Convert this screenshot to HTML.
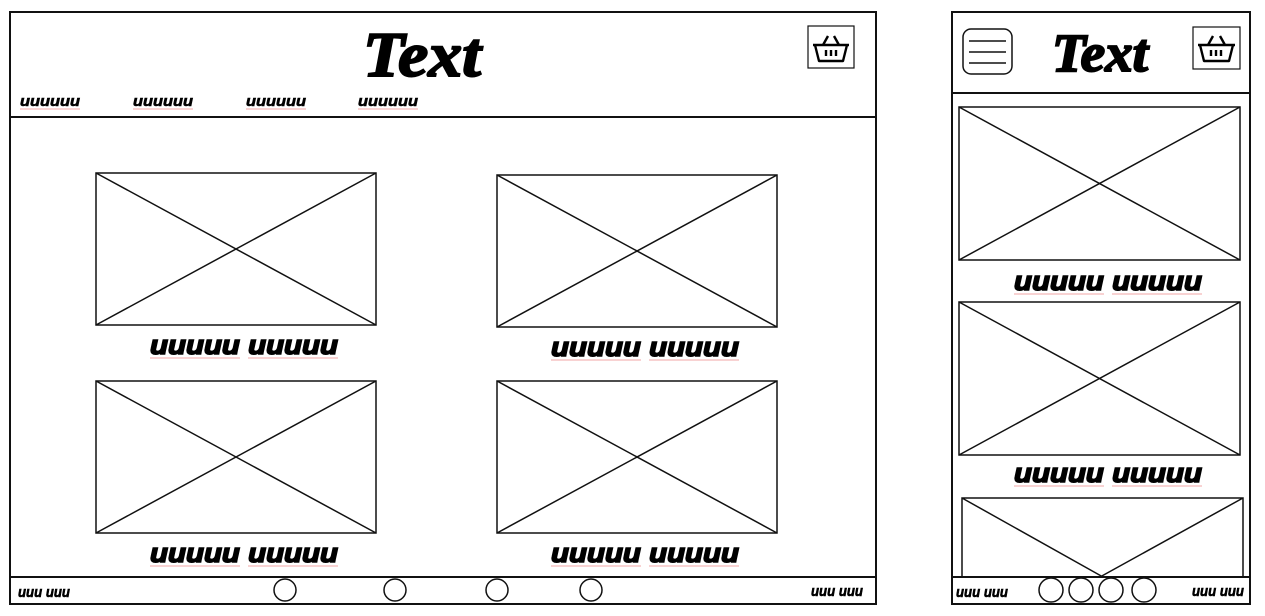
<!DOCTYPE html>
<html><head><meta charset="utf-8"><style>
html,body{margin:0;padding:0;background:#fff;width:1265px;height:616px;overflow:hidden}
svg{display:block}
.t{font-family:"Liberation Serif",serif;font-weight:bold;font-style:italic;fill:#000;stroke:#000;stroke-width:2}
.c{font-family:"Liberation Sans",sans-serif;font-weight:900;font-style:italic;fill:#000;stroke:#000}
</style></head><body>
<svg width="1265" height="616" viewBox="0 0 1265 616" xmlns="http://www.w3.org/2000/svg">
<g fill="none" stroke="#111" stroke-width="2">
<rect x="10" y="12" width="866" height="592"/>
<line x1="10" y1="117" x2="876" y2="117"/>
<line x1="10" y1="577" x2="876" y2="577"/>
<rect x="808" y="26" width="46" height="42" stroke-width="1.2"/>
<g stroke-width="1.5">
<rect x="96" y="173" width="280" height="152"/><path d="M96 173L376 325M376 173L96 325"/>
<rect x="497" y="175" width="280" height="152"/><path d="M497 175L777 327M777 175L497 327"/>
<rect x="96" y="381" width="280" height="152"/><path d="M96 381L376 533M376 381L96 533"/>
<rect x="497" y="381" width="280" height="152"/><path d="M497 381L777 533M777 381L497 533"/>
</g>
<circle cx="285" cy="590" r="11" stroke-width="1.5"/>
<circle cx="395" cy="590" r="11" stroke-width="1.5"/>
<circle cx="497" cy="590" r="11" stroke-width="1.5"/>
<circle cx="591" cy="590" r="11" stroke-width="1.5"/>

<rect x="952" y="12" width="298" height="592"/>
<line x1="952" y1="93" x2="1250" y2="93"/>
<rect x="963" y="29" width="49" height="45" rx="8" stroke-width="1.5"/>
<path d="M969 41H1006M969 52H1006M969 63H1006" stroke-width="1.5"/>
<rect x="1193" y="27" width="47" height="42" stroke-width="1.2"/>
<g stroke-width="1.5">
<rect x="959" y="107" width="281" height="153"/><path d="M959 107L1240 260M1240 107L959 260"/>
<rect x="959" y="302" width="281" height="153"/><path d="M959 302L1240 455M1240 302L959 455"/>
<path d="M962 577V498H1243V577M962 498L1103 577M1243 498L1100 577"/>
</g>
<rect x="952" y="577" width="298" height="27" fill="#fff"/>
<circle cx="1051" cy="590" r="12" stroke-width="1.5"/>
<circle cx="1081" cy="590" r="12" stroke-width="1.5"/>
<circle cx="1111" cy="590" r="12" stroke-width="1.5"/>
<circle cx="1144" cy="590" r="12" stroke-width="1.5"/>
</g>
<g fill="none" stroke="#000" stroke-width="2.4" stroke-linejoin="round">
<path d="M813 45H849M815 45L819 61H843L847 45M823 45L828 36M839 45L834 36M826 50V56M831 50V56M836 50V56"/>
<path d="M1198 45H1235M1200 45L1204 61H1229L1233 45M1208 45L1213 36M1225 45L1220 36M1211 50V56M1216 50V56M1221 50V56"/>
</g>
<text class="t" x="422" y="76" font-size="64" text-anchor="middle" textLength="118" lengthAdjust="spacingAndGlyphs">Text</text>
<text class="t" x="1100" y="71" font-size="54" text-anchor="middle" textLength="96" lengthAdjust="spacingAndGlyphs">Text</text>
<g class="c" font-size="15" stroke-width="0.6">
<text x="20" y="106" textLength="60" lengthAdjust="spacingAndGlyphs">uuuuuu</text>
<text x="133" y="106" textLength="60" lengthAdjust="spacingAndGlyphs">uuuuuu</text>
<text x="246" y="106" textLength="60" lengthAdjust="spacingAndGlyphs">uuuuuu</text>
<text x="358" y="106" textLength="60" lengthAdjust="spacingAndGlyphs">uuuuuu</text>
<text x="18" y="597" textLength="52" lengthAdjust="spacingAndGlyphs">uuu uuu</text>
<text x="811" y="596" textLength="52" lengthAdjust="spacingAndGlyphs">uuu uuu</text>
<text x="956" y="597" textLength="52" lengthAdjust="spacingAndGlyphs">uuu uuu</text>
<text x="1192" y="596" textLength="52" lengthAdjust="spacingAndGlyphs">uuu uuu</text>
</g>
<g class="c" font-size="27" stroke-width="1.6">
<text x="150" y="354" textLength="188" lengthAdjust="spacingAndGlyphs">uuuuu uuuuu</text>
<text x="551" y="356" textLength="188" lengthAdjust="spacingAndGlyphs">uuuuu uuuuu</text>
<text x="150" y="562" textLength="188" lengthAdjust="spacingAndGlyphs">uuuuu uuuuu</text>
<text x="551" y="562" textLength="188" lengthAdjust="spacingAndGlyphs">uuuuu uuuuu</text>
<text x="1014" y="290" textLength="188" lengthAdjust="spacingAndGlyphs">uuuuu uuuuu</text>
<text x="1014" y="482" textLength="188" lengthAdjust="spacingAndGlyphs">uuuuu uuuuu</text>
</g>
<g stroke="#e88" stroke-width="0.8" fill="none">
<path d="M150 358H240M248 358H338M551 360H641M649 360H739M150 566H240M248 566H338M551 566H641M649 566H739M1014 294H1104M1112 294H1202M1014 486H1104M1112 486H1202"/>
<path d="M20 109H80M133 109H193M246 109H306M358 109H418"/>
</g>
</svg>
</body></html>
